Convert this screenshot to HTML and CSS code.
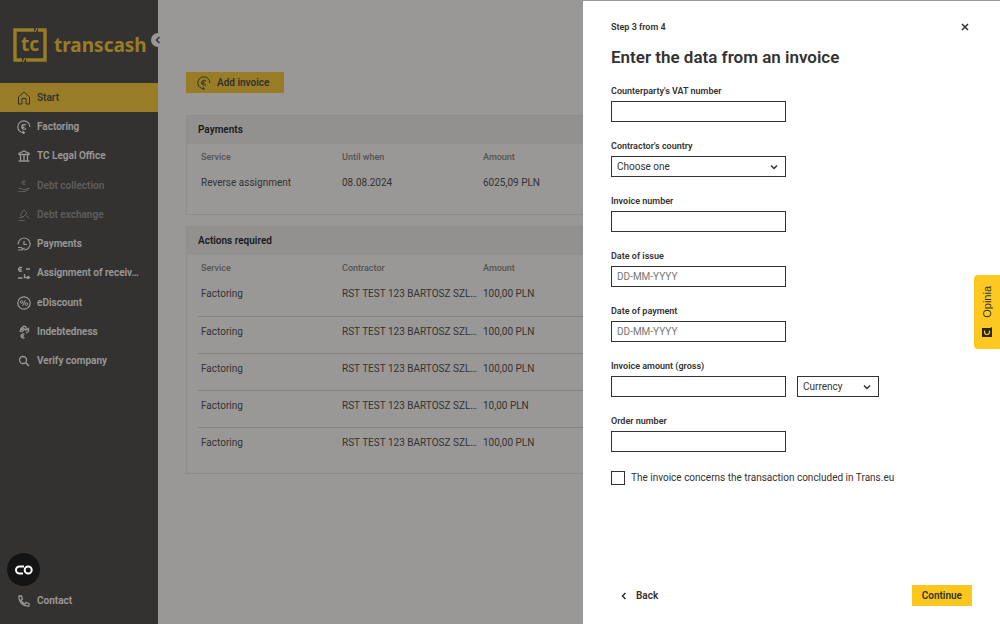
FILE: index.html
```html
<!DOCTYPE html>
<html lang="en">

    <head>
        <meta charset="utf-8">
        <title>Transcash</title>
        <link rel="stylesheet" href="styles.css">
    </head>

    <body>
        <div class="app">
            <aside class="sidebar">
                <a href="#" class="logo">
                    <svg class="logo-mark" viewBox="0 0 34 34">
                        <path d="M21 2H2v30h7M13 32h19V2h-7" fill="none" stroke="currentColor" stroke-width="3.4" />
                        <path d="M24 0l-2 4M12 30l-2 4" stroke="currentColor" stroke-width="1.4" />
                        <text x="17" y="23" text-anchor="middle">tc</text>
                    </svg>
                    <span class="logo-text">transcash</span>
                </a>
                <button class="collapse" aria-label="Collapse menu">
                    <svg viewBox="0 0 14 14"><path d="M8.5 4L5.5 7l3 3" /></svg>
                </button>

                <nav class="nav">
                    <a href="#" class="nav-item active">
                        <svg viewBox="0 0 14 14"><path d="M1.5 6L7 1l5.5 5v7H9V7.5H5V13H1.5z" /></svg>
                        <span>Start</span>
                    </a>
                    <a href="#" class="nav-item">
                        <svg viewBox="0 0 14 14"><path d="M12.8 7A6 6 0 1 0 7 12.8M9 5a2.5 2.5 0 1 0 0 3.5M4.5 6h3M4.5 7.5h3M5.5 11l2 1.8-1.5 1.2" stroke-width="1.2" /></svg>
                        <span>Factoring</span>
                    </a>
                    <a href="#" class="nav-item">
                        <svg viewBox="0 0 14 14"><path d="M2 5.5v-1L7 2l5 2.5v1zM3.5 6v5M7 6v5M10.5 6v5M1.5 12h11" stroke-width="1.3" /></svg>
                        <span>TC Legal Office</span>
                    </a>
                    <a href="#" class="nav-item disabled">
                        <svg viewBox="0 0 14 14"><path d="M8.5 2a2 2 0 1 0 0 3M5.5 3.5H8M1.5 9.5h2.5l2 1h2.5M1.5 12.5H8l4.5-3H10L8 11" /></svg>
                        <span>Debt collection</span>
                    </a>
                    <a href="#" class="nav-item disabled">
                        <svg viewBox="0 0 14 14"><path d="M3 7l4-5 3 3-4 4zM8.5 7l4 3.5M2 9.5h4M1.5 12.5h6" /></svg>
                        <span>Debt exchange</span>
                    </a>
                    <a href="#" class="nav-item">
                        <svg viewBox="0 0 14 14"><path d="M1.2 7.5a6 6 0 1 1 6 5.5M7 4v3.5h3M1 10.5h3l1.5 1M1 13h4l2.5-2" stroke-width="1.2" /></svg>
                        <span>Payments</span>
                    </a>
                    <a href="#" class="nav-item">
                        <svg viewBox="0 0 14 14"><path d="M5 1.8a2 2 0 1 0 0 3M2 3.3h2.5M9 3h4M1 12h4.5M7.5 8v3.5h5M10.5 10l2 1.5-2 1.5" stroke-width="1.3" /></svg>
                        <span>Assignment of receiv…</span>
                    </a>
                    <a href="#" class="nav-item">
                        <svg viewBox="0 0 14 14"><circle cx="7" cy="7" r="6.2" stroke-width="1.2" /><path d="M5.5 10l3-6" /><circle cx="4.7" cy="6" r="1.3" /><circle cx="9.3" cy="8" r="1.3" /></svg>
                        <span>eDiscount</span>
                    </a>
                    <a href="#" class="nav-item">
                        <svg viewBox="0 0 14 14"><path d="M3 7L4 3.5 7 1l2 1v3l2.5-1.5v3L9 8M4 5l3-2M4.5 7L8 4M7.5 9.5a2 2 0 1 0 0 3M4.5 11H7" stroke-width="1.3" /></svg>
                        <span>Indebtedness</span>
                    </a>
                    <a href="#" class="nav-item">
                        <svg viewBox="0 0 14 14"><circle cx="6" cy="6" r="3.5" stroke-width="1.3" /><path d="M8.6 8.6L12 12" stroke-width="1.5" /></svg>
                        <span>Verify company</span>
                    </a>
                </nav>

                <a href="#" class="nav-item contact">
                    <svg viewBox="0 0 14 14"><path d="M2 2h2.5l1 3-1.5 1a8 8 0 0 0 4 4l1-1.5 3 1V12C6 12.5 1.5 8 2 2z" stroke-width="1.3" /></svg>
                    <span>Contact</span>
                </a>
            </aside>

            <main class="content">
                <button class="btn add-invoice">
                    <svg viewBox="0 0 14 14"><path d="M12.8 7A6 6 0 1 0 7 12.8M9 5a2.5 2.5 0 1 0 0 3.5M4.5 6h3M4.5 7.5h3M5.5 11l2 1.8-1.5 1.2" /></svg>
                    Add invoice
                </button>

                <section class="card">
                    <h2>Payments</h2>
                    <table>
                        <thead>
                            <tr><th>Service</th><th>Until when</th><th>Amount</th></tr>
                        </thead>
                        <tbody>
                            <tr><td>Reverse assignment</td><td>08.08.2024</td><td>6025,09 PLN</td></tr>
                        </tbody>
                    </table>
                </section>

                <section class="card">
                    <h2>Actions required</h2>
                    <table>
                        <thead>
                            <tr><th>Service</th><th>Contractor</th><th>Amount</th></tr>
                        </thead>
                        <tbody>
                            <tr><td>Factoring</td><td>RST TEST 123 BARTOSZ SZL…</td><td>100,00 PLN</td></tr>
                            <tr><td>Factoring</td><td>RST TEST 123 BARTOSZ SZL…</td><td>100,00 PLN</td></tr>
                            <tr><td>Factoring</td><td>RST TEST 123 BARTOSZ SZL…</td><td>100,00 PLN</td></tr>
                            <tr><td>Factoring</td><td>RST TEST 123 BARTOSZ SZL…</td><td>10,00 PLN</td></tr>
                            <tr><td>Factoring</td><td>RST TEST 123 BARTOSZ SZL…</td><td>100,00 PLN</td></tr>
                        </tbody>
                    </table>
                </section>
            </main>
        </div>

        <div class="overlay"></div>

        <form class="drawer">
            <div class="drawer-top">
                <span class="step">Step 3 from 4</span>
                <button type="button" class="close" aria-label="Close">
                    <svg viewBox="0 0 8 8"><path d="M1 1l6 6M7 1L1 7" /></svg>
                </button>
            </div>
            <h1>Enter the data from an invoice</h1>

            <div class="fields">
                <div class="field">
                    <label for="vat">Counterparty's VAT number</label>
                    <input type="text" id="vat">
                </div>
                <div class="field">
                    <label for="country">Contractor's country</label>
                    <div class="select">
                        <select id="country"><option>Choose one</option></select>
                        <svg viewBox="0 0 8 8"><path d="M1 2.5l3 3 3-3" /></svg>
                    </div>
                </div>
                <div class="field">
                    <label for="number">Invoice number</label>
                    <input type="text" id="number">
                </div>
                <div class="field">
                    <label for="issue">Date of issue</label>
                    <input type="text" id="issue" placeholder="DD-MM-YYYY">
                </div>
                <div class="field">
                    <label for="payment">Date of payment</label>
                    <input type="text" id="payment" placeholder="DD-MM-YYYY">
                </div>
                <div class="field">
                    <label for="amount">Invoice amount (gross)</label>
                    <div class="amount-row">
                        <input type="text" id="amount">
                        <div class="select currency">
                            <select aria-label="Currency"><option>Currency</option></select>
                            <svg viewBox="0 0 8 8"><path d="M1 2.5l3 3 3-3" /></svg>
                        </div>
                    </div>
                </div>
                <div class="field">
                    <label for="order">Order number</label>
                    <input type="text" id="order">
                </div>
            </div>
            <label class="check">
                <input type="checkbox">
                The invoice concerns the transaction concluded in Trans.eu
            </label>

            <div class="drawer-footer">
                <button type="button" class="back">
                    <svg viewBox="0 0 8 8"><path d="M5.5 1l-3 3 3 3" /></svg>
                    Back
                </button>
                <button type="button" class="btn">Continue</button>
            </div>
        </form>

        <button class="feedback">
            <svg viewBox="0 0 12 12">
                <path d="M1 2h8l2-1v10H1z" fill="#2b2518" />
                <path d="M3.5 4.5V6a2.5 2.5 0 0 0 5 0V4.5" fill="none" stroke="#fdc820" stroke-width="1.2" />
            </svg>
            <span>Opinia</span>
        </button>

        <button class="cookies" aria-label="Cookie settings">
            <svg viewBox="0 0 18 10">
                <path d="M9 1.5H4.5a3.5 3.5 0 0 0 0 7H8" />
                <circle cx="13.2" cy="5" r="3.5" />
            </svg>
        </button>
    </body>

</html>
```
FILE: styles.css
```css
* {
    box-sizing: border-box;
}

body {
    margin: 0;
    font-family: Roboto, "Liberation Sans", sans-serif;
    font-size: 10px;
    line-height: 12px;
    color: #333230;
}

button,
input,
select {
    font: inherit;
    color: inherit;
}

button {
    border: none;
    background: none;
    padding: 0;
    cursor: pointer;
}

a {
    color: inherit;
    text-decoration: none;
}

svg {
    flex: none;
    fill: none;
    stroke: currentColor;
}

.app {
    display: flex;
    min-height: 100vh;
}

/* sidebar */

.sidebar {
    position: relative;
    flex: none;
    width: 158px;
    display: flex;
    flex-direction: column;
    background: #333230;
    color: #fff;
    padding-bottom: 9px;
}

.logo {
    display: flex;
    align-items: center;
    gap: 7px;
    height: 83px;
    padding: 6px 0 0 13px;
    color: #fcc71c;
}

.logo-mark {
    width: 34px;
    height: 34px;
}

.logo-mark text {
    font: bold 19px "Noto Sans", sans-serif;
    fill: currentColor;
    stroke: none;
}

.logo-text {
    font: bold 19px "Noto Sans", sans-serif;
}

.collapse {
    position: absolute;
    top: 33px;
    right: -7px;
    width: 14px;
    height: 14px;
    border-radius: 50%;
    background: #fff;
    color: #333230;
}

.collapse svg {
    display: block;
    stroke-width: 1.4;
}

.nav {
    display: grid;
    grid-template-columns: minmax(0, 1fr);
    grid-auto-rows: 1fr;
    height: 293px;
}

.nav-item {
    display: flex;
    align-items: center;
    gap: 6px;
    min-height: 29px;
    padding: 0 16px 0 17px;
    font-weight: 600;
}

.nav-item svg {
    width: 14px;
    height: 14px;
}

.nav-item span {
    white-space: nowrap;
}

.nav-item.active {
    background: #fcc71c;
    color: #333230;
}

.nav-item.disabled {
    color: #8a8988;
}

.contact {
    margin-top: auto;
}

/* page content */

.content {
    flex: 1;
    min-width: 0;
    padding: 72px 28px 28px;
}

.btn {
    display: flex;
    align-items: center;
    justify-content: center;
    height: 21px;
    padding: 0 10px;
    background: #fcc71c;
    font-weight: 600;
}

.add-invoice {
    gap: 6px;
    padding: 0 15px 0 11px;
    margin-bottom: 22px;
}

.add-invoice svg {
    width: 14px;
    height: 14px;
}

.card {
    border: 1px solid #e8e8e6;
    padding-bottom: 9px;
    margin-bottom: 11px;
}

.card h2 {
    margin: 0;
    padding: 8px 11px;
    background: #f0f0ee;
    color: #000;
    font-size: 10px;
    line-height: 12px;
    font-weight: 600;
}

.card table {
    width: calc(100% - 22px);
    margin: 0 11px;
    border-collapse: collapse;
    table-layout: fixed;
}

.card th,
.card td {
    padding: 0 0 0 3px;
    text-align: left;
    vertical-align: top;
    white-space: nowrap;
}

.card th {
    height: 24px;
    padding-top: 7px;
    font-size: 9px;
    font-weight: 500;
    color: #777674;
}

.card th:nth-child(-n+2) {
    width: 141px;
}

.card td {
    height: 37px;
    padding-top: 9px;
}

.card tr + tr td {
    border-top: 1px solid #d4d4d2;
}

.overlay {
    position: fixed;
    inset: 0;
    background: rgba(51, 50, 48, 0.5);
}

/* drawer */

.drawer {
    position: fixed;
    top: 0;
    right: 0;
    bottom: 0;
    width: 417px;
    max-width: 100%;
    display: flex;
    flex-direction: column;
    padding: 19px 28px 18px;
    border-top: 1px solid #999896;
    background: #fff;
    overflow-y: auto;
}

.drawer-top {
    display: flex;
    align-items: center;
    justify-content: space-between;
    font-size: 9px;
    font-weight: 600;
}

.close {
    display: flex;
    padding: 3px;
}

.close svg,
.back svg,
.select svg {
    width: 8px;
    height: 8px;
    stroke-width: 1.5;
}

.drawer h1 {
    margin: 12px 0 17px;
    font-size: 17px;
    line-height: 22px;
    font-weight: 600;
}

.fields {
    display: flex;
    flex-direction: column;
    gap: 18px;
}

.field {
    display: flex;
    flex-direction: column;
    align-items: flex-start;
    gap: 4px;
}

.field label {
    font-size: 9px;
    font-weight: 600;
}

.field input,
.select,
.select select {
    width: 175px;
    height: 21px;
}

.field input,
.select select {
    padding: 0 5px;
    border: 1px solid #333230;
    border-radius: 0;
    background: #fff;
}

.field input::placeholder {
    color: #777674;
}

.select {
    position: relative;
}

.select select {
    appearance: none;
}

.select svg {
    position: absolute;
    top: 7px;
    right: 8px;
    pointer-events: none;
}

.amount-row {
    display: flex;
    gap: 11px;
}

.select.currency,
.currency select {
    width: 82px;
}

.check {
    display: flex;
    align-items: center;
    gap: 6px;
    margin: 19px 0;
}

.check input {
    appearance: none;
    width: 14px;
    height: 14px;
    margin: 0;
    border: 1px solid #333230;
}

.check input:checked {
    background: #fcc71c;
}

.drawer-footer {
    display: flex;
    justify-content: space-between;
    margin-top: auto;
}

.back {
    display: flex;
    align-items: center;
    gap: 8px;
    padding-left: 9px;
    font-weight: 600;
}

/* floating buttons */

.feedback {
    position: fixed;
    right: 0;
    top: 275px;
    width: 26px;
    height: 74px;
    display: flex;
    flex-direction: column-reverse;
    align-items: center;
    justify-content: center;
    gap: 8px;
    border-radius: 4px 0 0 4px;
    background: #fdc820;
    font-family: "Liberation Sans", Arial, sans-serif;
    font-size: 11px;
}

.feedback span {
    writing-mode: vertical-rl;
    transform: rotate(180deg);
}

.feedback svg {
    width: 12px;
    height: 12px;
    stroke: none;
}

.cookies {
    position: fixed;
    left: 7px;
    bottom: 38px;
    width: 33px;
    height: 33px;
    display: flex;
    align-items: center;
    justify-content: center;
    border-radius: 50%;
    background: #141414;
    color: #fff;
}

.cookies svg {
    width: 18px;
    height: 10px;
    stroke-width: 2;
}
```
